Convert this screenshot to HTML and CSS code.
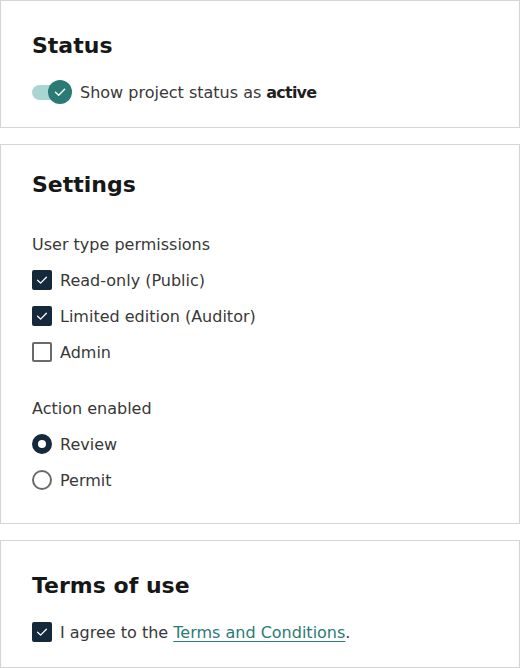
FILE: index.html
```html
<!DOCTYPE html>
<html lang="en">
<head>
<meta charset="utf-8">
<title>Settings</title>
<link rel="stylesheet" href="styles.css">
</head>
<body>
<main class="stack">
  <section class="card">
    <h2 class="card-title">Status</h2>
    <div class="row">
      <span class="toggle">
        <span class="toggle-track"></span>
        <span class="toggle-knob">
          <svg viewBox="0 0 24 24" width="24" height="24"><path d="M7.5 12.2 L10.7 15.3 L16.6 9.2" fill="none" stroke="#fff" stroke-width="1.4" stroke-linecap="round" stroke-linejoin="round"/></svg>
        </span>
      </span>
      <span class="label">Show project status as <strong>active</strong></span>
    </div>
  </section>

  <section class="card card-settings">
    <h2 class="card-title">Settings</h2>
    <div class="group">
      <div class="group-label">User type permissions</div>
      <div class="row">
        <span class="checkbox checked"><svg viewBox="0 0 20 20" width="20" height="20"><path d="M5.6 10.2 L8.6 13.1 L14.4 7.3" fill="none" stroke="#fff" stroke-width="1.3" stroke-linecap="round" stroke-linejoin="round"/></svg></span>
        <span class="label">Read-only (Public)</span>
      </div>
      <div class="row">
        <span class="checkbox checked"><svg viewBox="0 0 20 20" width="20" height="20"><path d="M5.6 10.2 L8.6 13.1 L14.4 7.3" fill="none" stroke="#fff" stroke-width="1.3" stroke-linecap="round" stroke-linejoin="round"/></svg></span>
        <span class="label">Limited edition (Auditor)</span>
      </div>
      <div class="row">
        <span class="checkbox"></span>
        <span class="label">Admin</span>
      </div>
    </div>
    <div class="group group-second">
      <div class="group-label">Action enabled</div>
      <div class="row">
        <span class="radio checked"></span>
        <span class="label">Review</span>
      </div>
      <div class="row">
        <span class="radio"></span>
        <span class="label">Permit</span>
      </div>
    </div>
  </section>

  <section class="card">
    <h2 class="card-title">Terms of use</h2>
    <div class="row">
      <span class="checkbox checked"><svg viewBox="0 0 20 20" width="20" height="20"><path d="M5.6 10.2 L8.6 13.1 L14.4 7.3" fill="none" stroke="#fff" stroke-width="1.3" stroke-linecap="round" stroke-linejoin="round"/></svg></span>
      <span class="label">I agree to the <a class="link" href="#">Terms and Conditions</a>.</span>
    </div>
  </section>
</main>
</body>
</html>
```

FILE: styles.css
```css
* { box-sizing: border-box; }

html, body {
  margin: 0;
  padding: 0;
  background: #ffffff;
}

body {
  font-family: "DejaVu Sans", "Noto Sans", sans-serif;
  color: #383838;
  font-size: 16px;
  line-height: 24px;
}

.stack {
  display: flex;
  flex-direction: column;
  gap: 16px;
}

.card {
  border: 1px solid #d4d4d4;
  padding: 31px 31px 23px 31px;
  display: flex;
  flex-direction: column;
  gap: 20px;
}

.card-settings {
  padding-top: 26px;
  padding-bottom: 31px;
  gap: 33px;
}

.card-title {
  margin: 0;
  font-size: 22px;
  line-height: 28px;
  font-weight: bold;
  color: #171717;
}

.group {
  display: flex;
  flex-direction: column;
  gap: 12px;
}

.group-second {
  margin-top: -1px;
}

.group-label {
  color: #383838;
  padding-top: 1px;
  height: 24px;
}

.row {
  display: flex;
  align-items: center;
  gap: 8px;
  height: 24px;
}

.label {
  padding-top: 2px;
}

.label strong {
  font-weight: bold;
  color: #1f1f1f;
  letter-spacing: -0.8px;
}

.toggle {
  position: relative;
  width: 40px;
  height: 24px;
  flex: 0 0 40px;
}

.toggle-track {
  position: absolute;
  left: 0;
  top: 5px;
  width: 34px;
  height: 15px;
  border-radius: 8px;
  background: #a9d6d2;
}

.toggle-knob {
  position: absolute;
  left: 16px;
  top: 0;
  width: 24px;
  height: 24px;
  border-radius: 50%;
  background: #2a7b74;
  display: flex;
  align-items: center;
  justify-content: center;
}

.toggle-knob svg { display: block; }

.checkbox {
  width: 20px;
  height: 20px;
  flex: 0 0 20px;
  border: 2px solid #6a6a6a;
  border-radius: 2px;
  display: flex;
  align-items: center;
  justify-content: center;
}

.checkbox.checked {
  border: none;
  background: #16293a;
}

.checkbox svg { display: block; }

.radio {
  width: 20px;
  height: 20px;
  flex: 0 0 20px;
  border: 2px solid #6a6a6a;
  border-radius: 50%;
}

.radio.checked {
  border: 6px solid #16293a;
  background: #ffffff;
}

.link {
  color: #2a7b74;
  text-decoration: underline;
  text-underline-offset: 3px;
  text-decoration-thickness: 1px;
}
```
